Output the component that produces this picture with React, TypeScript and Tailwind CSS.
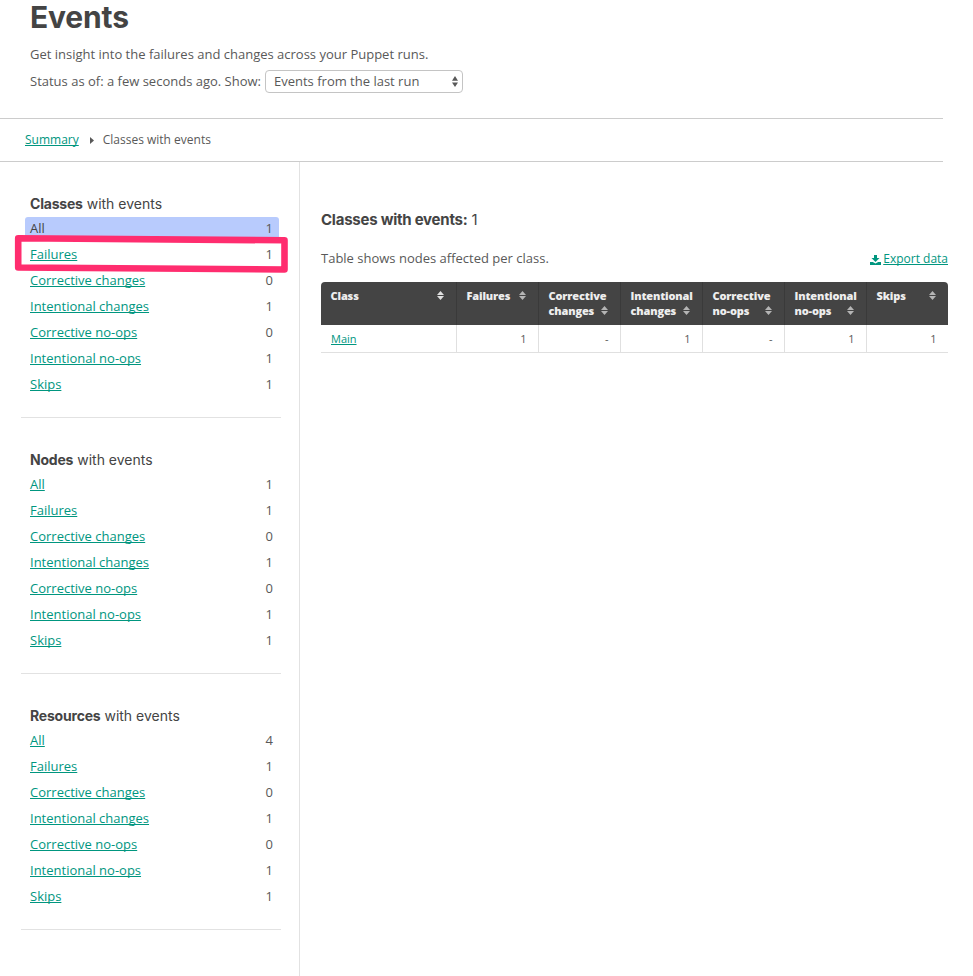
type Row = [label: string, count: number];

const sections: { title: string; rows: Row[]; active?: string }[] = [
  {
    title: 'Classes',
    active: 'All',
    rows: [['All', 1], ['Failures', 1], ['Corrective changes', 0], ['Intentional changes', 1], ['Corrective no-ops', 0], ['Intentional no-ops', 1], ['Skips', 1]],
  },
  {
    title: 'Nodes',
    rows: [['All', 1], ['Failures', 1], ['Corrective changes', 0], ['Intentional changes', 1], ['Corrective no-ops', 0], ['Intentional no-ops', 1], ['Skips', 1]],
  },
  {
    title: 'Resources',
    rows: [['All', 4], ['Failures', 1], ['Corrective changes', 0], ['Intentional changes', 1], ['Corrective no-ops', 0], ['Intentional no-ops', 1], ['Skips', 1]],
  },
];

const columns: { lines: string[]; value: string }[] = [
  { lines: ['Failures'], value: '1' },
  { lines: ['Corrective', 'changes'], value: '-' },
  { lines: ['Intentional', 'changes'], value: '1' },
  { lines: ['Corrective', 'no-ops'], value: '-' },
  { lines: ['Intentional', 'no-ops'], value: '1' },
  { lines: ['Skips'], value: '1' },
];

const link = 'text-[#00967f] underline decoration-1 underline-offset-1 [text-decoration-skip-ink:none]';
const heading = 'font-[Inter,sans-serif] text-[#444]';

function SortIcon({ bright = false }: { bright?: boolean }) {
  return (
    <svg width="7" height="9" viewBox="0 0 7 9" className={bright ? 'shrink-0 fill-[#e0e0e0]' : 'shrink-0 fill-[#b5b5b5]'}>
      <path d="M3.5 0 7 4H0zM0 5h7L3.5 9z" />
    </svg>
  );
}

function HeaderCell({ lines, bright }: { lines: string[]; bright?: boolean }) {
  const last = lines[lines.length - 1];
  return (
    <div className="flex flex-col border-r border-[#3a3a3a] pt-[6px] pr-3 pl-[9.5px] last:border-r-0">
      {lines.slice(0, -1).map((l) => (
        <span key={l} className="whitespace-nowrap">{l}</span>
      ))}
      <div className="flex items-center justify-between">
        <span>{last}</span>
        <SortIcon bright={bright} />
      </div>
    </div>
  );
}

function SidebarSection({ title, rows, active }: { title: string; rows: Row[]; active?: string }) {
  return (
    <section className="ml-[21px] h-64 w-[260px] border-b border-[#e2e2e2] pt-[31px]">
      <h2 className={`${heading} mb-1 ml-[9px] h-5 text-[14px] leading-[21px]`}>
        <b className="font-bold tracking-[-0.2px]">{title}</b> with events
      </h2>
      <ul className="ml-1 flex w-[254px] flex-col gap-1">
        {rows.map(([label, count]) => (
          <li
            key={label}
            className={
              label === active
                ? 'flex h-[22px] justify-between rounded-t-[3px] bg-[#b8cbfd] pr-[6px] pl-[5px] leading-[22px]'
                : 'flex h-[22px] justify-between pr-[6px] pl-[5px] leading-[22px]'
            }
          >
            {label === active ? <span className="text-[#444]">{label}</span> : <a className={link}>{label}</a>}
            <span>{count}</span>
          </li>
        ))}
      </ul>
    </section>
  );
}

export default function App() {
  return (
    <div className="relative flex h-[976px] w-[973px] flex-col overflow-hidden bg-white font-['Open_Sans',sans-serif] text-[13px] text-[#595959]">
      <header className="h-[119px] w-[943px] shrink-0 border-b border-[#ccc] pl-[30px]">
        <h1 className={`${heading} h-[41px] text-[30px] leading-[34px] font-bold tracking-[-0.15px]`}>Events</h1>
        <p className="h-[29px] leading-[27px]">Get insight into the failures and changes across your Puppet runs.</p>
        <div className="flex h-[23px] items-center">
          <span className="w-[235px] whitespace-nowrap">Status as of: a few seconds ago. Show:</span>
          <div className="flex h-[23px] w-[198px] items-center justify-between rounded-[4px] border border-[#c4c4c4] pr-1 pl-2">
            <span>Events from the last run</span>
            <svg width="6" height="11" viewBox="0 0 6 11" className="fill-[#595959]">
              <path d="M3 0 6 4.7H0zM0 6.5h6L3 11z" />
            </svg>
          </div>
        </div>
      </header>

      <nav className="flex h-[43px] w-[943px] shrink-0 items-center border-b border-[#ccc] pl-[25px] text-[12px]">
        <a className={link}>Summary</a>
        <svg width="4" height="7" viewBox="0 0 4 7" className="mt-px mr-[9px] ml-[11px] fill-[#595959]">
          <path d="M0 0 4 3.5 0 7z" />
        </svg>
        <span>Classes with events</span>
      </nav>

      <div className="flex min-h-0 flex-1">
        <aside className="w-[300px] shrink-0 border-r border-[#e2e2e2]">
          {sections.map((s) => (
            <SidebarSection key={s.title} {...s} />
          ))}
        </aside>

        <main className="ml-[21px] w-[627px] pt-[47px]">
          <h2 className={`${heading} h-[22px] text-[15px] leading-[22px] tracking-[-0.24px]`}>
            <b className="font-bold">Classes with events:</b> 1
          </h2>
          <div className="mt-[17px] flex h-[34px] justify-between leading-[20px]">
            <p>Table shows nodes affected per class.</p>
            <div className="flex items-center self-start pt-px text-[12px]">
              <svg width="11" height="10" viewBox="0 0 11 10" className="mt-px mr-[2px] fill-[#00967f]">
                <path d="M4 0h3v3h2.5l-4 4-4-4H4zM0 7h2.8l2.7 1.6L8.2 7H11v3H0z" />
              </svg>
              <a className={link}>Export data</a>
            </div>
          </div>

          <div className="text-[11px]">
            <div className="grid h-[43px] grid-cols-[136px_82px_82px_82px_82px_82px_81px] rounded-t-[4px] bg-[#444] leading-[15px] font-extrabold tracking-[-0.15px] text-[#eee]">
              <HeaderCell lines={['Class']} bright />
              {columns.map((c, i) => (
                <HeaderCell key={i} lines={c.lines} />
              ))}
            </div>
            <div className="grid h-7 grid-cols-[136px_82px_82px_82px_82px_82px_81px] border-b border-[#e0e0e0] leading-[28px]">
              <div className="border-r border-[#e0e0e0] pl-[10px]">
                <a className={link}>Main</a>
              </div>
              {columns.map((c, i) => (
                <div key={i} className="border-r border-[#e0e0e0] pr-[11.5px] text-right last:border-r-0">{c.value}</div>
              ))}
            </div>
          </div>
        </main>
      </div>

      <svg width="276" height="42" viewBox="0 0 276 42" className="pointer-events-none absolute top-[233px] left-[14px]">
        <path d="M4.2 5.2 270.5 7.3V36.5L4.2 34.5z" fill="none" stroke="#ff2d6f" strokeWidth="6.6" strokeLinejoin="round" />
      </svg>
    </div>
  );
}
